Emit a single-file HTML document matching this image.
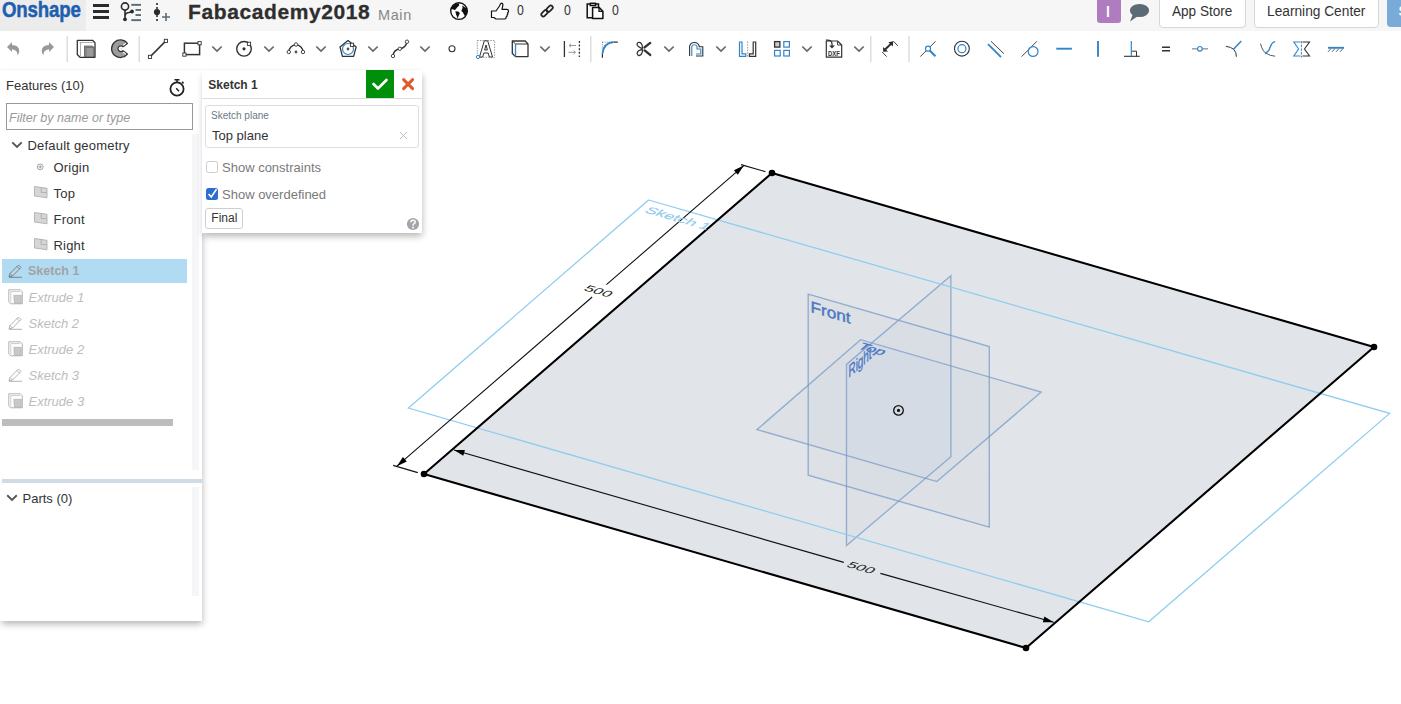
<!DOCTYPE html>
<html><head><meta charset="utf-8">
<style>
*{margin:0;padding:0;box-sizing:border-box}
html,body{width:1401px;height:704px;overflow:hidden;background:#fff;font-family:"Liberation Sans",sans-serif;position:relative}
.a{position:absolute}
.t{position:absolute;white-space:nowrap;line-height:1}
svg{position:absolute;overflow:visible}
</style></head><body>

<!-- VIEWPORT -->
<svg id="vp" class="a" style="left:0;top:0" width="1401" height="704" viewBox="0 0 1401 704">
<polygon points="772,173 1374,347 1026,648 424,474" fill="#e1e4e8"/>
<polygon points="808.2,294.1 989.3,346.5 989.3,527.1 808.2,475.2" fill="rgba(125,165,205,0.04)" stroke="rgba(120,155,200,0.75)" stroke-width="1.35"/>
<polygon points="757,429.6 860.6,339.7 1041.2,392.1 936.8,481.6" fill="rgba(125,165,205,0.04)" stroke="rgba(120,155,200,0.75)" stroke-width="1.35"/>
<polygon points="846.5,545.5 846.5,364.4 950.9,275.8 950.9,456.8" fill="rgba(125,165,205,0.04)" stroke="rgba(120,155,200,0.75)" stroke-width="1.35"/>
<polygon points="648.6,200 1389.6,413.4 1148.7,621.8 408.4,408" fill="none" stroke="#8fcdef" stroke-width="1.3"/>
<polygon points="772,173 1374,347 1026,648 424,474" fill="none" stroke="#000" stroke-width="2.1" stroke-linejoin="round"/>
<circle cx="772" cy="173" r="3.3" fill="#000"/>
<circle cx="1374" cy="347" r="3.3" fill="#000"/>
<circle cx="1026" cy="648" r="3.3" fill="#000"/>
<circle cx="424" cy="474" r="3.3" fill="#000"/>
<g stroke="#111" stroke-width="1.1" fill="none">
<path d="M741,164.6 L765.5,171.7 M393.1,465.4 L417.8,472.6 M743.8,165.6 L606.4,284.7 M592.2,297 L396.9,466.2"/>
<path d="M454,450 L843.8,562.4 M880.4,573.4 L1053.7,622.3"/>
</g>
<path d="M743.8,165.6 L737.8,174.7 L733.9,170.2Z" fill="#000"/>
<path d="M396.9,466.2 L402.9,457.1 L406.8,461.6Z" fill="#000"/>
<path d="M1053.7,622.3 L1042.8,622.3 L1044.4,616.5Z" fill="#000"/>
<path d="M454.0,450.0 L464.9,450.0 L463.3,455.8Z" fill="#000"/>
<circle cx="898.5" cy="410.4" r="4.8" fill="none" stroke="#111" stroke-width="1.3"/><circle cx="898.5" cy="410.4" r="1.6" fill="#111"/>
<text transform="matrix(1.4087,0.4072,-0.7795,0.6742,598.7,291.0)" font-size="11" text-anchor="middle" dominant-baseline="central" fill="#222" font-family="Liberation Sans">500</text>
<text transform="matrix(1.4087,0.4072,-0.7795,0.6742,861.5,567.5)" font-size="11" text-anchor="middle" dominant-baseline="central" fill="#222" font-family="Liberation Sans">500</text>
<text transform="matrix(1.3485,0.3898,-0.7656,0.6622,643.5,212.0)" font-size="12" fill="#8fcdef" stroke="#8fcdef" stroke-width="0.2" font-family="Liberation Sans">Sketch 1</text>
<text transform="matrix(1.7217,0.4976,0.0000,1.5691,810.5,312.0)" font-size="10" fill="#4a78c4" stroke="#4a78c4" stroke-width="0.25" font-family="Liberation Sans">Front</text>
<text transform="matrix(1.5652,0.4524,-0.9396,0.8127,856.8,348.2)" font-size="10" fill="#4a78c4" stroke="#4a78c4" stroke-width="0.25" font-family="Liberation Sans">Top</text>
<text transform="matrix(0.9883,-0.8548,0.0000,1.7502,848.5,378.0)" font-size="10" fill="#4a78c4" stroke="#4a78c4" stroke-width="0.25" font-family="Liberation Sans">Right</text>

</svg>

<!-- TOP BAR -->
<div class="a" style="left:0;top:0;width:1401px;height:31px;background:#f6f6f6"></div>
<div class="a" style="left:0;top:0;width:86px;height:31px;background:#ececec"></div>
<div class="t" style="left:2px;top:-1.5px;font-size:22.5px;font-weight:bold;color:#1f5fae;transform:scaleX(0.83);transform-origin:0 0;letter-spacing:-0.2px;-webkit-text-stroke:0.5px #1f5fae">Onshape</div>
<svg style="left:0;top:0" width="1401" height="31">
 <g fill="#2b2b2b"><rect x="93" y="4" width="16" height="3"/><rect x="93" y="10" width="16" height="3"/><rect x="93" y="16" width="16" height="3"/></g>
 <g fill="none" stroke="#2b2b2b" stroke-width="1.6"><circle cx="125" cy="6.5" r="3.6"/><path d="M125,10 V19 M125,16.5 Q125,13 129,12.5 L131.5,11.8"/></g>
 <circle cx="125" cy="19.3" r="1.9" fill="#2b2b2b"/><circle cx="132" cy="11.5" r="1.9" fill="#2b2b2b"/>
 <g fill="#5a6b78"><rect x="131.3" y="3.9" width="9.7" height="1.9"/><rect x="135.5" y="9" width="5.5" height="1.9"/><rect x="135.5" y="14.1" width="5.5" height="1.9"/><rect x="131.3" y="19.2" width="9.7" height="1.9"/></g>
 <path d="M157,3 V21" stroke="#2b2b2b" stroke-width="1.6" stroke-dasharray="2,2"/>
 <circle cx="157" cy="12" r="3.1" fill="#2b2b2b"/>
 <path d="M166,13 V21 M162,17 H170" stroke="#5a6b78" stroke-width="1.6"/>
</svg>
<div class="t" style="left:188px;top:1px;font-size:21px;font-weight:bold;color:#2e2e2e;letter-spacing:0.6px;-webkit-text-stroke:0.3px #2e2e2e">Fabacademy2018</div>
<div class="t" style="left:378px;top:7.5px;font-size:14.5px;color:#888;letter-spacing:0.6px">Main</div>
<svg style="left:449px;top:1px" width="20" height="20" viewBox="0 0 20 20">
 <circle cx="10" cy="10.1" r="8.3" fill="#fff" stroke="#111" stroke-width="1.4"/>
 <path d="M2,6.8 Q4.5,2.2 9.8,2.6 L10.3,4.6 L8.8,5.8 L7.3,7.6 L5.8,9.2 L4.6,8.6 L2.4,8 Z M6.3,10.2 L9.2,10.6 L10.9,12 L9.8,14.5 L8.4,17.4 L7.8,15.2 L7,13.2 Z M13.2,4.6 L15.2,5.8 L17.6,7.6 L18.6,10.2 L17.8,12.8 L15.8,15 L14.8,13.2 L13.8,11.2 L12.4,10.2 L12.9,8.2 L13.6,7 Z" fill="#111"/>
</svg>
<svg style="left:490px;top:2px" width="20" height="18" viewBox="0 0 20 18">
 <path d="M1.5,9 H6 L9.5,4 Q10.5,1 12,1.2 Q13.5,1.8 12.5,5 L12,7.3 H17 Q18.7,7.5 18.5,9.3 Q18.3,10.5 17.5,10.8 Q18.5,12 17,13 Q17.5,14.5 16,15 Q16.5,16.7 14.5,17 H6 L4,15.5 H1.5 Z" fill="#fff" stroke="#111" stroke-width="1.2" stroke-linejoin="round"/>
</svg>
<div class="t" style="left:517px;top:3px;font-size:14px;color:#333;transform:scaleX(0.88);transform-origin:0 0">0</div>
<svg style="left:540px;top:4.5px" width="14" height="14" viewBox="0 0 14 14">
 <g fill="none" stroke="#222" stroke-width="1.7"><rect x="0.8" y="6.3" width="7.5" height="4" rx="2" transform="rotate(-45 4.5 8.3)"/><rect x="5.8" y="1.8" width="7.5" height="4" rx="2" transform="rotate(-45 9.5 3.8)"/></g>
</svg>
<div class="t" style="left:564px;top:3px;font-size:14px;color:#333;transform:scaleX(0.88);transform-origin:0 0">0</div>
<svg style="left:586px;top:2px" width="18" height="18" viewBox="0 0 18 18">
 <g fill="none" stroke="#111" stroke-width="1.5"><path d="M4.2,1.9 H1.2 V15.7 H6.5 M9.6,1.9 H12.5 V5.3"/><rect x="4.3" y="1.3" width="5.3" height="2.2"/></g>
 <path d="M6.6,5.4 H13 L16.9,9.3 V16.6 H6.6 Z" fill="#fff" stroke="#111" stroke-width="1.5" stroke-linejoin="round"/>
 <path d="M13,5.4 V9.3 H16.9" fill="none" stroke="#111" stroke-width="1.3"/>
</svg>
<div class="t" style="left:612px;top:3px;font-size:14px;color:#333;transform:scaleX(0.88);transform-origin:0 0">0</div>

<div class="a" style="left:1097px;top:0;width:24px;height:23px;background:#b07cc0;border-radius:0 0 3px 3px"></div>
<div class="t" style="left:1106px;top:5px;font-size:14px;font-weight:bold;color:#fff">l</div>
<svg style="left:1129px;top:3px" width="21" height="19" viewBox="0 0 21 19">
 <ellipse cx="10.5" cy="7.5" rx="9.6" ry="6.6" fill="#5d6a73"/><path d="M4,11 L1,18.5 L9,13 Z" fill="#5d6a73"/>
</svg>
<div class="a" style="left:1159px;top:-4px;width:87px;height:32px;border:1px solid #d6d6d6;border-radius:4px;background:#fff"></div>
<div class="t" style="left:1172px;top:4px;font-size:14px;color:#333;transform:scaleX(0.97);transform-origin:0 0">App Store</div>
<div class="a" style="left:1254px;top:-4px;width:125px;height:32px;border:1px solid #d6d6d6;border-radius:4px;background:#fff"></div>
<div class="t" style="left:1267px;top:4px;font-size:14px;color:#333;transform:scaleX(0.98);transform-origin:0 0">Learning Center</div>
<div class="a" style="left:1387px;top:-4px;width:30px;height:31px;background:#7aaad8;border-radius:4px"></div>
<div class="t" style="left:1398.5px;top:4px;font-size:14px;color:#fff;font-weight:bold">S</div>

<!-- TOOLBAR -->
<div class="a" style="left:0;top:31px;width:1401px;height:37px;background:#fff"></div>
<svg style="left:0;top:0" width="1401" height="70" viewBox="0 0 1401 70">
<defs>
 <g id="chev"><path d="M-4.7,-2.3 L0,2.2 L4.7,-2.3" fill="none" stroke="#666" stroke-width="1.7"/></g>
 <g id="sq"><rect x="-1.6" y="-1.6" width="3.2" height="3.2" fill="#fff" stroke="#333" stroke-width="0.9"/></g>
 <g id="cir"><circle r="1.7" fill="#fff" stroke="#333" stroke-width="0.9"/></g>
</defs>
<!-- undo / redo -->
<path d="M7,47 L12,42 V45 Q19,45 19.3,51 Q19.3,53.5 17.5,55.5 Q18,50 12,49.3 V52 Z" fill="#999"/>
<path d="M54,47 L49,42 V45 Q42,45 41.7,51 Q41.7,53.5 43.5,55.5 Q43,50 49,49.3 V52 Z" fill="#999"/>
<g fill="#ddd"><rect x="66.5" y="36" width="1.5" height="26"/><rect x="138.5" y="36" width="1.5" height="26"/><rect x="590" y="36" width="1.5" height="26"/><rect x="870" y="36" width="1.5" height="26"/><rect x="908.2" y="36" width="1.5" height="26"/></g>
<!-- part studio -->
<path d="M77.3,40.3 H92.5 L95,42.8 V57.3 H80 L77.3,54.5 Z" fill="#fff" stroke="#333" stroke-width="1.3" stroke-linejoin="round"/>
<path d="M79.5,42.5 H92.8 M80.5,43 V56" stroke="#999" stroke-width="0.8" fill="none"/>
<path d="M84.5,46 H92.5 L94,47.5 V57 H85 L84.5,56.5 Z" fill="#9a9a9a" stroke="#333" stroke-width="0.6"/>
<path d="M84.5,46 L86,47.5 H94 M86,47.5 V57" stroke="#555" stroke-width="0.6" fill="none"/>
<!-- variable studio C -->
<path d="M127.4,43.4 A8.8,8.8 0 1 0 127.4,54 L123,50.7 A2.9,2.9 0 1 1 123,46.7 Z" fill="#9c9c9c" stroke="#333" stroke-width="1.25" stroke-linejoin="round"/>
<path d="M123.2,45.4 L125.9,43.1 M123.2,52 L125.9,54.3" stroke="#fff" stroke-width="1.1"/>
<circle cx="121.3" cy="48.7" r="1" fill="#ddd"/>
<!-- line -->
<path d="M150,56.9 L165.9,40.9" stroke="#333" stroke-width="1.5"/>
<use href="#sq" x="150" y="56.9"/><use href="#sq" x="165.9" y="40.9"/>
<!-- rect -->
<rect x="184.4" y="43.2" width="15.2" height="11.4" fill="none" stroke="#333" stroke-width="1.5"/>
<use href="#sq" x="199.6" y="43.2"/><use href="#sq" x="184.4" y="54.6"/>
<use href="#chev" x="217" y="48.8"/>
<!-- circle -->
<circle cx="244" cy="48.8" r="7.3" fill="none" stroke="#333" stroke-width="1.4"/>
<circle cx="244" cy="48.8" r="1.6" fill="#333"/>
<use href="#sq" x="249" y="43.8"/>
<use href="#chev" x="269" y="48.8"/>
<!-- arc -->
<path d="M288.8,52 A7.1,7.1 0 0 1 303,52" fill="none" stroke="#333" stroke-width="1.4"/>
<circle cx="296" cy="52" r="1.4" fill="#555"/>
<use href="#cir" x="288.8" y="52"/><use href="#cir" x="296" y="44.5"/><use href="#cir" x="303" y="52"/>
<use href="#chev" x="321" y="48.8"/>
<!-- polygon -->
<path d="M348,40.6 L356.2,46.9 L353.6,56.3 H342.4 L340,46.9 Z" fill="none" stroke="#333" stroke-width="1.3" stroke-linejoin="round"/>
<circle cx="348" cy="49" r="5.5" fill="none" stroke="#3384c8" stroke-width="1.2"/>
<circle cx="348" cy="49" r="1.4" fill="#555"/>
<use href="#sq" x="352" y="44.8"/>
<use href="#chev" x="373" y="48.8"/>
<!-- spline -->
<path d="M393,56 Q393.5,50 399.8,48.8 Q406,48 407,41.7" fill="none" stroke="#333" stroke-width="1.4"/>
<use href="#cir" x="393" y="56"/><use href="#cir" x="399.8" y="48.8"/><use href="#cir" x="407" y="41.7"/>
<use href="#chev" x="425" y="48.8"/>
<!-- point -->
<circle cx="452" cy="48.8" r="3" fill="none" stroke="#333" stroke-width="1.1"/>
<!-- text -->
<rect x="477.3" y="40.5" width="17.3" height="16.8" fill="none" stroke="#666" stroke-width="0.7" stroke-dasharray="1.4,1.2"/>
<path d="M479.5,57 L484.3,40.8 H487.7 L492.5,57 H489.3 L488.2,53 H483.8 L482.7,57 Z M484.6,50 H487.4 L486,45 Z" fill="#fff" stroke="#333" stroke-width="1"/>
<circle cx="478" cy="57" r="1.6" fill="#fff" stroke="#3384c8" stroke-width="1"/>
<!-- construction cube -->
<path d="M512.3,41 H525.2 L528,44 V56.6 H515.5 L512.3,53.5 Z" fill="#fff" stroke="#333" stroke-width="1.3" stroke-linejoin="round"/>
<path d="M512.5,41.2 L515.5,44 H528" fill="none" stroke="#333" stroke-width="1"/>
<path d="M515.5,44 V56.6" stroke="#3384c8" stroke-width="1.3"/>
<use href="#chev" x="545" y="48.8"/>
<!-- spaced -->
<path d="M564.4,41 V57" stroke="#333" stroke-width="1.3"/>
<path d="M579.4,41 V57" stroke="#333" stroke-width="1.3" stroke-dasharray="2,1.6"/>
<path d="M576,45.5 H569 M571,43.8 L569,45.5 L571,47.2 M568.5,52.3 H575.5 M573.5,50.6 L575.5,52.3 L573.5,54" fill="none" stroke="#999" stroke-width="1"/>
<!-- fillet -->
<path d="M602.4,53.6 V57.8 M613.5,42.1 H617.8" stroke="#333" stroke-width="1.2"/>
<path d="M602.4,42.1 V53 M602.4,42.1 H613" stroke="#555" stroke-width="0.8" stroke-dasharray="0.9,1.3"/>
<path d="M602.4,53.6 Q603.5,43 613.5,42" fill="none" stroke="#3384c8" stroke-width="1.8"/>
<!-- trim -->
<path d="M642.8,48.6 Q642.5,45.5 641.3,43.5 Q639.8,41.8 638.1,42.5 Q636.6,43.4 637.3,45.3 Q638.2,47.3 642.8,48.6 Z" fill="none" stroke="#333" stroke-width="1.3" stroke-linejoin="round"/>
<path d="M642.8,49.2 Q642.5,52.3 641.3,54.3 Q639.8,56 638.1,55.3 Q636.6,54.4 637.3,52.5 Q638.2,50.5 642.8,49.2 Z" fill="none" stroke="#333" stroke-width="1.3" stroke-linejoin="round"/>
<path d="M644.6,47.4 L650.2,42.9 M644.6,50.4 L650.2,54.9" stroke="#333" stroke-width="2.4" stroke-linecap="round"/>
<circle cx="643.4" cy="48.9" r="0.7" fill="#fff"/>
<use href="#chev" x="669" y="48.8"/>
<!-- offset -->
<path d="M689.6,56 V46.2 A5,5 0 0 1 699.2,46 V46.8 H702.8 V56 H696" fill="none" stroke="#333" stroke-width="1.1"/>
<path d="M691.8,56 V46.5 A2.8,2.8 0 0 1 697,46.5 V49 H700.8 V54 H696" fill="none" stroke="#3384c8" stroke-width="1.1"/>
<use href="#chev" x="721" y="48.8"/>
<!-- mirror -->
<path d="M739.5,42 H742 V53.8 H745.8 V56.3 H739.5 Z" fill="none" stroke="#3384c8" stroke-width="1.2"/>
<path d="M747.6,41.5 V57" stroke="#888" stroke-width="0.8" stroke-dasharray="1.5,1.2"/>
<path d="M755.7,42 H753.2 V53.8 H749.4 V56.3 H755.7 Z" fill="none" stroke="#333" stroke-width="1.2"/>
<!-- pattern -->
<rect x="774.6" y="41.6" width="5.3" height="5.5" fill="#ccc" stroke="#333" stroke-width="1.3"/>
<g fill="none" stroke="#3384c8" stroke-width="1.2"><rect x="783.8" y="41.6" width="5.6" height="5.5"/><rect x="774.6" y="50.4" width="5.6" height="5.6"/><rect x="783.8" y="50.4" width="5.6" height="5.6"/></g>
<use href="#chev" x="807" y="48.8"/>
<!-- dxf -->
<path d="M826.3,41 H837.5 L841.7,45 V57.2 H826.3 Z" fill="#fff" stroke="#333" stroke-width="1.2" stroke-linejoin="round"/>
<path d="M837.5,41 V45 H841.7" fill="none" stroke="#333" stroke-width="0.9"/>
<path d="M826,40.2 Q832,39.5 832,44 V46" fill="none" stroke="#333" stroke-width="1.3"/>
<path d="M829,45.5 H835 L832,48.5 Z" fill="#333"/>
<text x="834" y="55.8" font-size="6.6" font-weight="bold" text-anchor="middle" fill="#333" font-family="Liberation Sans" transform="translate(834 0) scale(0.9 1) translate(-834 0)">DXF</text>
<use href="#chev" x="859" y="48.8"/>
<!-- dimension -->
<path d="M885.3,49.3 L891.2,43.6" stroke="#2a2a2a" stroke-width="2"/>
<path d="M888.4,42.2 L893.2,41.3 L892.8,46.6 Z M883,46.9 L883.2,51.7 L888.1,51.6 Z" fill="#2a2a2a"/>
<path d="M893.3,41.1 L897.8,45.8 M882.2,52 L886.6,56.6" stroke="#2a2a2a" stroke-width="0.9"/>
<!-- coincident -->
<path d="M920.3,56.6 L935.6,41.3" stroke="#333" stroke-width="0.9"/>
<path d="M929.7,50.5 L935.5,56.3" stroke="#3384c8" stroke-width="2"/>
<circle cx="928" cy="48.7" r="2.5" fill="#fff" stroke="#3384c8" stroke-width="1.2"/>
<!-- concentric -->
<circle cx="961.9" cy="48.7" r="7.4" fill="none" stroke="#333" stroke-width="1.1"/>
<circle cx="961.9" cy="48.7" r="4" fill="none" stroke="#3384c8" stroke-width="1.2"/>
<!-- parallel -->
<path d="M991,41.3 L1003.9,53.7" stroke="#333" stroke-width="0.9"/>
<path d="M988,44.2 L1001,57.2" stroke="#3384c8" stroke-width="1.7"/>
<!-- tangent -->
<path d="M1021.6,56.6 L1036.9,41.3" stroke="#333" stroke-width="0.9"/>
<circle cx="1033.1" cy="51.5" r="4.9" fill="none" stroke="#3384c8" stroke-width="1.2"/>
<!-- horizontal / vertical -->
<path d="M1056.3,48.7 H1071.9" stroke="#3384c8" stroke-width="1.9"/>
<path d="M1098,41.1 V56.8" stroke="#3384c8" stroke-width="1.9"/>
<!-- perpendicular -->
<path d="M1124,56.3 H1139.7" stroke="#333" stroke-width="1.1"/>
<path d="M1131.6,51.2 H1136.5 V56.3" fill="none" stroke="#333" stroke-width="1"/>
<path d="M1131.3,41 V56.3" stroke="#3384c8" stroke-width="1.2"/>
<!-- equal -->
<path d="M1162,47.2 H1170 M1162,50.8 H1170" stroke="#333" stroke-width="1.4"/>
<!-- midpoint -->
<path d="M1192,48.8 H1208" stroke="#999" stroke-width="1.4"/>
<circle cx="1199.9" cy="48.8" r="2.3" fill="#fff" stroke="#3384c8" stroke-width="1.1"/>
<!-- normal -->
<path d="M1225.9,46.3 Q1236.5,47.5 1236.4,56.8" fill="none" stroke="#333" stroke-width="1"/>
<path d="M1233.3,49.5 L1241.3,41.1" stroke="#3384c8" stroke-width="1.5"/>
<!-- curvature -->
<path d="M1260.5,43.6 Q1262.5,51.5 1266,53.1 Q1270,56 1275.1,56.2" fill="none" stroke="#444" stroke-width="0.9"/>
<path d="M1266,53.1 Q1269.5,50.5 1270.5,46.5 Q1272,42 1275.1,41.6" fill="none" stroke="#3384c8" stroke-width="1.3"/>
<circle cx="1266" cy="53" r="1.2" fill="#3384c8"/>
<!-- symmetric -->
<path d="M1300.5,42 H1293.8 L1298.6,49 L1293.8,56 H1300.5" fill="none" stroke="#3384c8" stroke-width="1.1"/>
<path d="M1302.5,42 H1309.5 L1304.5,49 L1309.5,56 H1302.5" fill="none" stroke="#333" stroke-width="1.1"/>
<path d="M1301.4,41 V57.5" stroke="#3384c8" stroke-width="1" stroke-dasharray="2.5,1.2"/>
<!-- fix -->
<path d="M1328,47.8 H1344" stroke="#3384c8" stroke-width="1.9"/>
<path d="M1328,51.8 L1330.8,48.8 M1332,51.8 L1334.8,48.8 M1336,51.8 L1338.8,48.8 M1340,51.8 L1342.8,48.8" stroke="#333" stroke-width="0.8"/>
</svg>

<!-- LEFT PANEL -->
<div class="a" style="left:0;top:70px;width:202px;height:551px;background:#fff;box-shadow:1px 4px 7px -1px rgba(0,0,0,.3),0 -1px 1px rgba(0,0,0,.02)"></div>
<div class="t" style="left:6px;top:78.6px;font-size:13px;color:#333">Features (10)</div>
<svg style="left:167px;top:78px" width="20" height="20" viewBox="0 0 20 20">
 <circle cx="10" cy="11" r="6.6" fill="none" stroke="#222" stroke-width="1.8"/>
 <path d="M7.5,1.8 H12.5 M10,2 V4.3 M15,3.8 L16.6,5.4 M9.2,10.3 L12,13.2" stroke="#222" stroke-width="1.5" fill="none"/>
</svg>
<div class="a" style="left:6px;top:103px;width:187px;height:27px;border:1px solid #999"></div>
<div class="t" style="left:9px;top:111px;font-size:13px;font-style:italic;color:#9a9a9a;transform:scaleX(0.965);transform-origin:0 0">Filter by name or type</div>
<div class="a" style="left:192px;top:134px;width:7px;height:336px;background:#f5f6f8"></div>
<svg style="left:0;top:130px" width="190" height="290" viewBox="0 130 190 290">
 <path d="M12.3,142.3 L17,147 L21.7,142.3" fill="none" stroke="#555" stroke-width="1.9"/>
 <circle cx="40.2" cy="166.9" r="2.9" fill="#fff" stroke="#999" stroke-width="0.9"/><path d="M38.6,166.9 H41.8 M40.2,165.3 V168.5" stroke="#888" stroke-width="0.8"/>
 <g fill="#d6d6d6" stroke="#a8a8a8" stroke-width="0.8">
  <path d="M34.5,186.5 L47,188.3 V197.8 L34.5,196 Z"/><path d="M41.2,187.5 V192.6 H47" fill="none"/>
  <path d="M34.5,212.5 L47,214.3 V223.8 L34.5,222 Z"/><path d="M41.2,213.5 V218.6 H47" fill="none"/>
  <path d="M34.5,238.5 L47,240.3 V249.8 L34.5,248 Z"/><path d="M41.2,239.5 V244.6 H47" fill="none"/>
 </g>
</svg>
<div class="t" style="left:27.5px;top:138.9px;font-size:13px;color:#333;letter-spacing:0.2px">Default geometry</div>
<div class="t" style="left:53.5px;top:161px;font-size:13px;color:#333;letter-spacing:0.2px">Origin</div>
<div class="t" style="left:53.5px;top:187.2px;font-size:13px;color:#333;letter-spacing:0.2px">Top</div>
<div class="t" style="left:53.5px;top:213px;font-size:13px;color:#333;letter-spacing:0.2px">Front</div>
<div class="t" style="left:53.5px;top:238.8px;font-size:13px;color:#333;letter-spacing:0.2px">Right</div>
<div class="a" style="left:2px;top:259px;width:185px;height:24px;background:#b0dbf3"></div>
<div class="t" style="left:28px;top:265px;font-size:12.5px;font-weight:bold;color:#a3a3a3">Sketch 1</div>
<div class="t" style="left:28.5px;top:290.9px;font-size:13px;font-style:italic;color:#bdbdbd">Extrude 1</div>
<div class="t" style="left:28.5px;top:316.9px;font-size:13px;font-style:italic;color:#bdbdbd">Sketch 2</div>
<div class="t" style="left:28.5px;top:342.9px;font-size:13px;font-style:italic;color:#bdbdbd">Extrude 2</div>
<div class="t" style="left:28.5px;top:368.9px;font-size:13px;font-style:italic;color:#bdbdbd">Sketch 3</div>
<div class="t" style="left:28.5px;top:394.9px;font-size:13px;font-style:italic;color:#bdbdbd">Extrude 3</div>
<svg style="left:0;top:255px" width="30" height="160" viewBox="0 255 30 160">
 <defs>
  <g id="pen"><path d="M0,13 L1,9.5 L9.5,1 L12,3.5 L3.5,12 Z M1,9.5 L3.5,12 M8,2.5 L10.5,5" fill="none" stroke-width="0.9" stroke-linejoin="round"/><path d="M0,13.3 H13" stroke-width="0.9"/></g>
  <g id="ext"><path d="M0.5,0.5 H12 L14,2.5 V14.5 H2.5 L0.5,12.5 Z" fill="#fff" stroke-width="0.9" stroke-linejoin="round"/><path d="M2.2,2.3 H12 M2.5,2.5 V13" fill="none" stroke-width="0.6"/><path d="M5.5,6 H13 V14 H6 Z" fill="#c8c8c8" stroke-width="0.6"/></g>
 </defs>
 <use href="#pen" x="9" y="264" stroke="#777"/>
 <use href="#ext" x="8.3" y="289.3" stroke="#aaa"/>
 <use href="#pen" x="9" y="316" stroke="#aaa"/>
 <use href="#ext" x="8.3" y="341.3" stroke="#aaa"/>
 <use href="#pen" x="9" y="368" stroke="#aaa"/>
 <use href="#ext" x="8.3" y="393.3" stroke="#aaa"/>
</svg>
<div class="a" style="left:2px;top:419px;width:171px;height:6.5px;background:#bdbdbd"></div>
<div class="a" style="left:2px;top:479px;width:200px;height:4px;background:#cfdbe5"></div>
<svg style="left:0;top:490px" width="20" height="15" viewBox="0 490 20 15">
 <path d="M7.2,495.3 L12,500 L16.8,495.3" fill="none" stroke="#555" stroke-width="1.9"/>
</svg>
<div class="t" style="left:22.5px;top:492px;font-size:13px;color:#333">Parts (0)</div>
<div class="a" style="left:192px;top:487px;width:7px;height:109px;background:#f5f6f8"></div>

<!-- SKETCH DIALOG -->
<div class="a" style="left:202px;top:70px;width:220px;height:163px;background:#fff;box-shadow:1px 4px 7px -1px rgba(0,0,0,.3),0 -1px 1px rgba(0,0,0,.02)"></div>
<div class="t" style="left:208.3px;top:78.9px;font-size:12px;font-weight:bold;color:#333">Sketch 1</div>
<div class="a" style="left:366px;top:70px;width:28px;height:28px;background:#008f0b"></div>
<svg style="left:366px;top:70px" width="28" height="28" viewBox="0 0 28 28">
 <path d="M7.5,14 L12,18.5 L20.5,10" fill="none" stroke="#fff" stroke-width="2.6" stroke-linecap="round" stroke-linejoin="round"/>
</svg>
<svg style="left:400px;top:76px" width="16" height="16" viewBox="0 0 16 16">
 <path d="M3.6,3.6 L12.6,12.6 M12.6,3.6 L3.6,12.6" stroke="#e05a2b" stroke-width="3" stroke-linecap="round"/>
</svg>
<div class="a" style="left:202px;top:98px;width:220px;height:1px;background:#dcdcdc"></div>
<div class="a" style="left:205px;top:104.5px;width:214px;height:43px;border:1px solid #dedede;border-radius:3px"></div>
<div class="t" style="left:211px;top:111.4px;font-size:10px;color:#6b7a88">Sketch plane</div>
<div class="t" style="left:212px;top:128.7px;font-size:13px;color:#333">Top plane</div>
<svg style="left:398px;top:130px" width="11" height="11" viewBox="0 0 11 11">
 <path d="M2,2 L9,9 M9,2 L2,9" stroke="#bbb" stroke-width="0.9"/>
</svg>
<div class="a" style="left:206px;top:161.3px;width:12px;height:11.6px;border:1px solid #ccc;border-radius:2.5px;background:#fff"></div>
<div class="t" style="left:222px;top:160.7px;font-size:13px;color:#7a7a7a">Show constraints</div>
<div class="a" style="left:206px;top:188.4px;width:12px;height:11.6px;border-radius:2.5px;background:#2d6fcf"></div>
<svg style="left:206px;top:187px" width="13" height="13" viewBox="0 0 13 13">
 <path d="M2.6,7 L5.2,10 L10.5,2.3" fill="none" stroke="#fff" stroke-width="1.6"/>
</svg>
<div class="t" style="left:222px;top:187.8px;font-size:13px;color:#7a7a7a">Show overdefined</div>
<div class="a" style="left:205.3px;top:208.2px;width:37.5px;height:21.3px;border:1px solid #cfcfcf;border-radius:3px;background:#fff"></div>
<div class="t" style="left:211.3px;top:212.4px;font-size:12px;color:#333">Final</div>
<svg style="left:406px;top:217px" width="14" height="14" viewBox="0 0 14 14">
 <circle cx="7" cy="7" r="6.1" fill="#a2a6ab"/>
 <path d="M4.9,5.3 Q4.9,3.2 7,3.2 Q9.2,3.2 9.2,5.1 Q9.2,6.3 7.8,6.9 Q7,7.3 7,8.5" fill="none" stroke="#fff" stroke-width="1.5"/>
 <circle cx="7" cy="10.5" r="0.9" fill="#fff"/>
</svg>

</body></html>
